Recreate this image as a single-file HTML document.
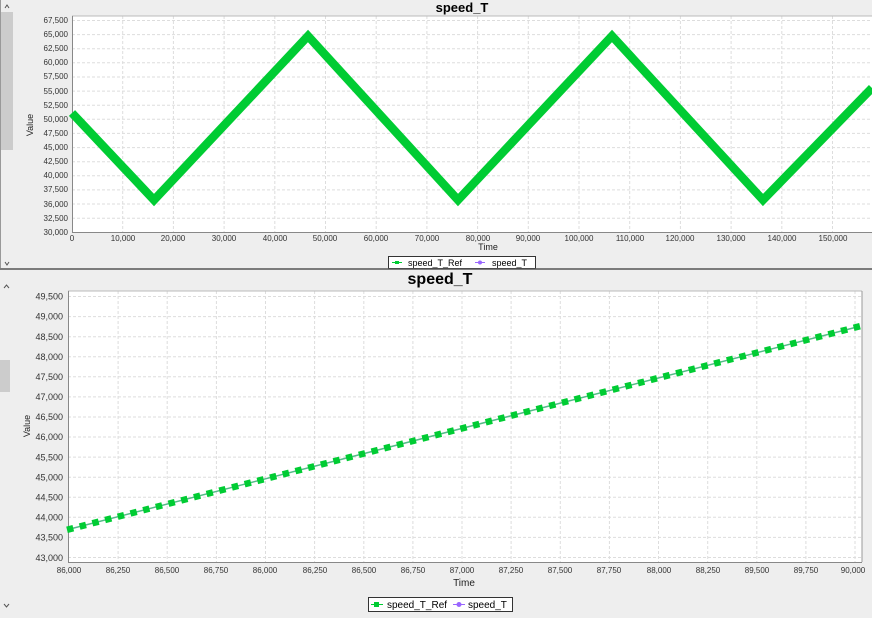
<!DOCTYPE html>
<html><head><meta charset="utf-8"><style>
html,body{margin:0;padding:0;background:#eeeeee;}
svg{display:block;font-family:"Liberation Sans",sans-serif;}
</style></head><body>
<svg width="872" height="618" viewBox="0 0 872 618" xmlns="http://www.w3.org/2000/svg">
<rect width="872" height="618" fill="#eeeeee"/>
<rect x="1" y="12" width="12" height="138" fill="#cccccc"/>
<line x1="0.5" y1="0" x2="0.5" y2="268" stroke="#999"/>
<path d="M5 8 L7 5 L9 8" fill="none" stroke="#555" stroke-width="1"/>
<path d="M5 262 L7 265 L9 262" fill="none" stroke="#555" stroke-width="1"/>
<text x="462" y="12" text-anchor="middle" font-size="13" font-weight="bold">speed_T</text>
<rect x="72" y="16" width="800" height="216" fill="#fff"/>
<g stroke="#dddddd" stroke-dasharray="3 2" stroke-width="1">
<line x1="72" y1="20.5" x2="872" y2="20.5"/><line x1="72" y1="34.6" x2="872" y2="34.6"/><line x1="72" y1="48.7" x2="872" y2="48.7"/><line x1="72" y1="62.8" x2="872" y2="62.8"/><line x1="72" y1="77" x2="872" y2="77"/><line x1="72" y1="91.1" x2="872" y2="91.1"/><line x1="72" y1="105.2" x2="872" y2="105.2"/><line x1="72" y1="119.3" x2="872" y2="119.3"/><line x1="72" y1="133.4" x2="872" y2="133.4"/><line x1="72" y1="147.6" x2="872" y2="147.6"/><line x1="72" y1="161.7" x2="872" y2="161.7"/><line x1="72" y1="175.8" x2="872" y2="175.8"/><line x1="72" y1="189.9" x2="872" y2="189.9"/><line x1="72" y1="204" x2="872" y2="204"/><line x1="72" y1="218.2" x2="872" y2="218.2"/>
<line x1="122.7" y1="16" x2="122.7" y2="232"/><line x1="173.4" y1="16" x2="173.4" y2="232"/><line x1="224.1" y1="16" x2="224.1" y2="232"/><line x1="274.8" y1="16" x2="274.8" y2="232"/><line x1="325.5" y1="16" x2="325.5" y2="232"/><line x1="376.2" y1="16" x2="376.2" y2="232"/><line x1="426.9" y1="16" x2="426.9" y2="232"/><line x1="477.6" y1="16" x2="477.6" y2="232"/><line x1="528.3" y1="16" x2="528.3" y2="232"/><line x1="579" y1="16" x2="579" y2="232"/><line x1="629.7" y1="16" x2="629.7" y2="232"/><line x1="680.4" y1="16" x2="680.4" y2="232"/><line x1="731.1" y1="16" x2="731.1" y2="232"/><line x1="781.8" y1="16" x2="781.8" y2="232"/><line x1="832.5" y1="16" x2="832.5" y2="232"/>
</g>
<line x1="72" y1="16" x2="872" y2="16" stroke="#bbb"/>
<line x1="72.5" y1="16" x2="72.5" y2="232" stroke="#888"/>
<line x1="72" y1="232.5" x2="872" y2="232.5" stroke="#888"/>
<polyline points="72,113 154,200 308,36 458,200 612,36 763,200 872,88" fill="none" stroke="#00cc33" stroke-width="8.5" stroke-linejoin="miter"/>
<g font-size="8" fill="#333" text-anchor="end">
<text x="68" y="23">67,500</text><text x="68" y="37">65,000</text><text x="68" y="51">62,500</text><text x="68" y="65">60,000</text><text x="68" y="79">57,500</text><text x="68" y="94">55,000</text><text x="68" y="108">52,500</text><text x="68" y="122">50,000</text><text x="68" y="136">47,500</text><text x="68" y="150">45,000</text><text x="68" y="164">42,500</text><text x="68" y="178">40,000</text><text x="68" y="192">37,500</text><text x="68" y="207">36,000</text><text x="68" y="221">32,500</text><text x="68" y="235">30,000</text>
</g>
<g font-size="8" fill="#333" text-anchor="middle">
<text x="72" y="241">0</text><text x="123" y="241">10,000</text><text x="173" y="241">20,000</text><text x="224" y="241">30,000</text><text x="275" y="241">40,000</text><text x="325" y="241">50,000</text><text x="376" y="241">60,000</text><text x="427" y="241">70,000</text><text x="478" y="241">80,000</text><text x="528" y="241">90,000</text><text x="579" y="241">100,000</text><text x="630" y="241">110,000</text><text x="680" y="241">120,000</text><text x="731" y="241">130,000</text><text x="782" y="241">140,000</text><text x="833" y="241">150,000</text>
</g>
<text x="488" y="250" text-anchor="middle" font-size="9" fill="#222">Time</text>
<text transform="translate(33,125) rotate(-90)" text-anchor="middle" font-size="9" fill="#222">Value</text>
<rect x="388.5" y="256.5" width="147" height="12" fill="#fff" stroke="#333"/>
<line x1="392" y1="262.5" x2="402" y2="262.5" stroke="#00cc33"/><rect x="395" y="261" width="4" height="3" fill="#00cc33"/>
<text x="408" y="266" font-size="9">speed_T_Ref</text>
<line x1="475" y1="262.5" x2="485" y2="262.5" stroke="#9966ff"/><circle cx="480" cy="262.5" r="2" fill="#9966ff"/>
<text x="492" y="266" font-size="9">speed_T</text>
<line x1="0" y1="269" x2="872" y2="269" stroke="#555" stroke-width="1.5"/>
<path d="M4 288 L6.5 285 L9 288" fill="none" stroke="#555"/>
<path d="M4 604 L6.5 607 L9 604" fill="none" stroke="#555"/>
<rect x="0" y="360" width="10" height="32" fill="#cccccc"/>
<text x="440" y="284" text-anchor="middle" font-size="16" font-weight="bold">speed_T</text>
<rect x="68" y="291" width="794" height="271" fill="#fff"/>
<g stroke="#dddddd" stroke-dasharray="3 2">
<line x1="68" y1="296.5" x2="862" y2="296.5"/><line x1="68" y1="316.6" x2="862" y2="316.6"/><line x1="68" y1="336.7" x2="862" y2="336.7"/><line x1="68" y1="356.7" x2="862" y2="356.7"/><line x1="68" y1="376.8" x2="862" y2="376.8"/><line x1="68" y1="396.9" x2="862" y2="396.9"/><line x1="68" y1="417" x2="862" y2="417"/><line x1="68" y1="437" x2="862" y2="437"/><line x1="68" y1="457.1" x2="862" y2="457.1"/><line x1="68" y1="477.2" x2="862" y2="477.2"/><line x1="68" y1="497.3" x2="862" y2="497.3"/><line x1="68" y1="517.3" x2="862" y2="517.3"/><line x1="68" y1="537.4" x2="862" y2="537.4"/><line x1="68" y1="557.5" x2="862" y2="557.5"/>
<line x1="118.1" y1="291" x2="118.1" y2="562"/><line x1="167.2" y1="291" x2="167.2" y2="562"/><line x1="216.4" y1="291" x2="216.4" y2="562"/><line x1="265.5" y1="291" x2="265.5" y2="562"/><line x1="314.6" y1="291" x2="314.6" y2="562"/><line x1="363.8" y1="291" x2="363.8" y2="562"/><line x1="412.9" y1="291" x2="412.9" y2="562"/><line x1="462" y1="291" x2="462" y2="562"/><line x1="511.1" y1="291" x2="511.1" y2="562"/><line x1="560.3" y1="291" x2="560.3" y2="562"/><line x1="609.4" y1="291" x2="609.4" y2="562"/><line x1="658.5" y1="291" x2="658.5" y2="562"/><line x1="707.7" y1="291" x2="707.7" y2="562"/><line x1="756.8" y1="291" x2="756.8" y2="562"/><line x1="805.9" y1="291" x2="805.9" y2="562"/><line x1="855" y1="291" x2="855" y2="562"/>
</g>
<line x1="68" y1="291" x2="862" y2="291" stroke="#bbb"/>
<line x1="862" y1="291" x2="862" y2="562" stroke="#999"/>
<line x1="68.5" y1="291" x2="68.5" y2="562" stroke="#888"/>
<line x1="68" y1="562.5" x2="862" y2="562.5" stroke="#888"/>
<line x1="70" y1="529" x2="857" y2="327" stroke="#55bb88" stroke-width="1.5"/>
<line x1="67" y1="529.8" x2="860" y2="326.2" stroke="#00cc33" stroke-width="6.5" stroke-dasharray="6.5 6.6"/>
<g font-size="9" fill="#333" text-anchor="end">
<text x="63" y="299.5">49,500</text><text x="63" y="319.5">49,000</text><text x="63" y="340">48,500</text><text x="63" y="360">48,000</text><text x="63" y="380">47,500</text><text x="63" y="400">47,000</text><text x="63" y="420">46,500</text><text x="63" y="440">46,000</text><text x="63" y="460.5">45,500</text><text x="63" y="480.5">45,000</text><text x="63" y="500.5">44,500</text><text x="63" y="520.5">44,000</text><text x="63" y="540.5">43,500</text><text x="63" y="561">43,000</text>
</g>
<g font-size="8" fill="#333" text-anchor="middle">
<text x="69" y="573">86,000</text><text x="118" y="573">86,250</text><text x="167" y="573">86,500</text><text x="216" y="573">86,750</text><text x="265" y="573">86,000</text><text x="315" y="573">86,250</text><text x="364" y="573">86,500</text><text x="413" y="573">86,750</text><text x="462" y="573">87,000</text><text x="511" y="573">87,250</text><text x="560" y="573">87,500</text><text x="609" y="573">87,750</text><text x="659" y="573">88,000</text><text x="708" y="573">88,250</text><text x="757" y="573">89,500</text><text x="806" y="573">89,750</text><text x="853" y="573">90,000</text>
</g>
<text x="464" y="586" text-anchor="middle" font-size="10" fill="#222">Time</text>
<text transform="translate(30,426) rotate(-90)" text-anchor="middle" font-size="9" fill="#222">Value</text>
<rect x="368.5" y="597.5" width="144" height="14" fill="#fff" stroke="#333"/>
<line x1="371" y1="604.5" x2="383" y2="604.5" stroke="#00cc33"/><rect x="374" y="602" width="5" height="5" fill="#00cc33"/>
<text x="387" y="608" font-size="10">speed_T_Ref</text>
<line x1="453" y1="604.5" x2="465" y2="604.5" stroke="#9966ff"/><circle cx="459" cy="604.5" r="2.5" fill="#9966ff"/>
<text x="468" y="608" font-size="10">speed_T</text>
</svg>
</body></html>
